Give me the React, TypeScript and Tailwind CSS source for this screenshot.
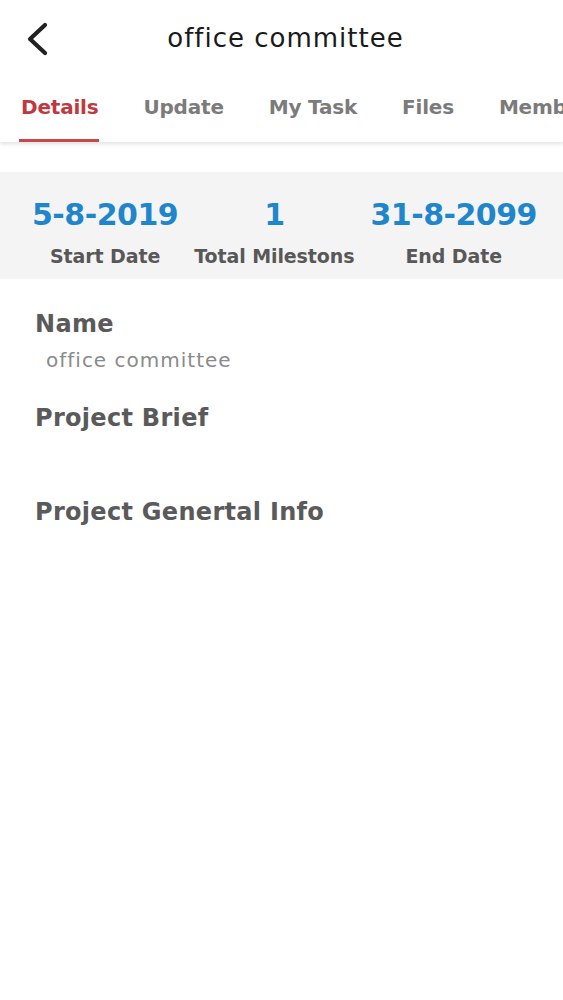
import React from "react";

const font = { fontFamily: '"DejaVu Sans", "Open Sans", sans-serif' };

function Stat({ value, label }: { value: string; label: string }) {
  return (
    <div className="flex flex-col items-center">
      <div className="text-[30px] leading-[38px] font-bold text-[#1f86cc] tracking-[-0.5px]">{value}</div>
      <div className="mt-[10px] text-[19px] leading-[24px] font-semibold text-[#585858] tracking-[-0.1px]">{label}</div>
    </div>
  );
}

export default function App() {
  const tabs = ["Details", "Update", "My Task", "Files", "Members"];
  return (
    <div className="w-[563px] h-[1000px] bg-white overflow-hidden" style={font}>
      <div className="relative z-10 bg-white shadow-[0_2px_4px_rgba(0,0,0,0.12)]">
        <div className="relative flex items-center justify-center h-[76px]">
          <svg className="absolute left-[22px] top-[20px]" width="32" height="38" viewBox="0 0 32 38" fill="none">
            <path d="M23 5 L8 19 L23 33" stroke="#222" strokeWidth="4.2" strokeLinecap="round" strokeLinejoin="round" />
          </svg>
          <div className="text-[26px] text-[#1a1a1a] tracking-[1px] pl-[8px]">office committee</div>
        </div>
        <div className="flex h-[66px] whitespace-nowrap overflow-hidden pl-[21px] gap-[45px]">
          {tabs.map((t, i) => (
            <div key={t} className="relative flex items-start pt-[17px] shrink-0">
              <span
                className={
                  "text-[20px] leading-[28px] font-semibold tracking-[-0.2px] " +
                  (i === 0 ? "text-[#be3a3e]" : "text-[#7b7b7b]")
                }
              >
                {t}
              </span>
              {i === 0 && <div className="absolute left-[-2px] right-[-1px] bottom-[0px] h-[3px] bg-[#c8484a]" />}
            </div>
          ))}
        </div>
      </div>
      <div className="mt-[30px] bg-[#f4f4f5] h-[107px] flex items-start justify-between pt-[24px] pl-[32px] pr-[26px]">
        <Stat value="5-8-2019" label="Start Date" />
        <Stat value="1" label="Total Milestons" />
        <Stat value="31-8-2099" label="End Date" />
      </div>
      <div className="px-[35px] pt-[30px]">
        <div className="text-[24px] leading-[30px] font-semibold text-[#5a5a5a] tracking-[0.3px]">Name</div>
        <div className="mt-[8px] pl-[11px] text-[20px] leading-[26px] text-[#8a8a8a] tracking-[1px]">office committee</div>
        <div className="mt-[30px] text-[24px] leading-[30px] font-semibold text-[#5a5a5a] tracking-[0.3px]">Project Brief</div>
        <div className="mt-[64px] text-[24px] leading-[30px] font-semibold text-[#5a5a5a] tracking-[0.3px]">Project Genertal Info</div>
      </div>
    </div>
  );
}
